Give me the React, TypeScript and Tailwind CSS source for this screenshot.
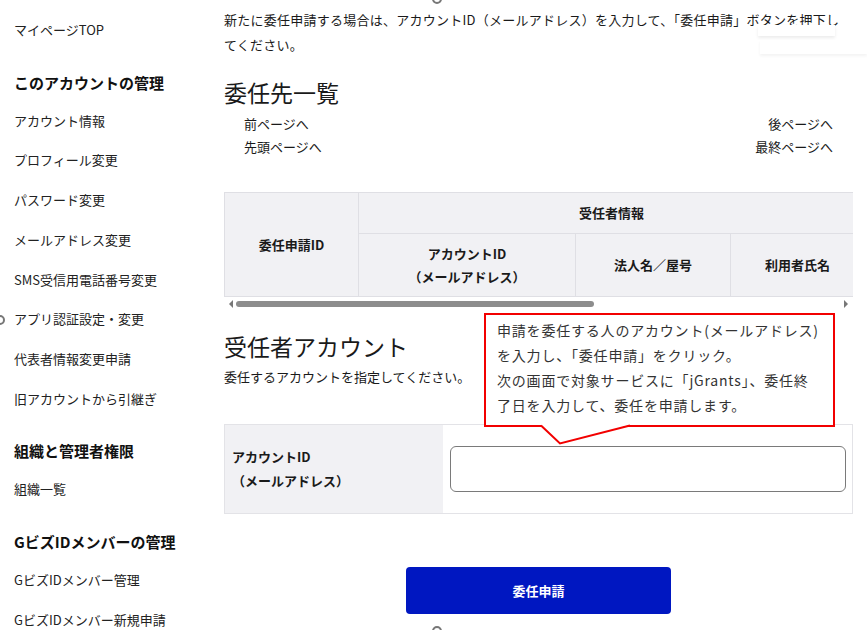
import React from "react";

const font = { fontFamily: '"Noto Sans CJK JP", "Noto Sans", sans-serif' };

const sideSections: { heading?: string; items: string[] }[] = [
  { items: ["マイページTOP"] },
  {
    heading: "このアカウントの管理",
    items: [
      "アカウント情報",
      "プロフィール変更",
      "パスワード変更",
      "メールアドレス変更",
      "SMS受信用電話番号変更",
      "アプリ認証設定・変更",
      "代表者情報変更申請",
      "旧アカウントから引継ぎ",
    ],
  },
  { heading: "組織と管理者権限", items: ["組織一覧"] },
  { heading: "GビズIDメンバーの管理", items: ["GビズIDメンバー管理", "GビズIDメンバー新規申請"] },
];

function Sidebar() {
  return (
    <aside className="w-[224px] shrink-0 pl-[14px] pt-[10px]">
      {sideSections.map((sec, i) => (
        <div key={i}>
          {sec.heading && (
            <h3 className="mt-[16px] flex h-[35px] items-center text-[15px] font-bold text-[#111]">
              {sec.heading}
            </h3>
          )}
          <ul>
            {sec.items.map((item) => (
              <li key={item} className="flex h-[39.7px] items-center text-[13px] text-[#222]">
                {item}
              </li>
            ))}
          </ul>
        </div>
      ))}
    </aside>
  );
}

function Callout() {
  return (
    <div className="absolute left-[484px] top-[313px] z-10">
      <div className="h-[114px] w-[351px] border-2 border-[#f20000] bg-white pl-[11px] pt-[3px] text-[14px] leading-[25px] tracking-[0.8px] text-[#333]">
        <p className="whitespace-nowrap">申請を委任する人のアカウント(メールアドレス)</p>
        <p className="whitespace-nowrap">を入力し、「委任申請」をクリック。</p>
        <p className="whitespace-nowrap">次の画面で対象サービスに「jGrants」、委任終</p>
        <p className="whitespace-nowrap">了日を入力して、委任を申請します。</p>
      </div>
      {/* 吹き出しのしっぽ */}
      <svg className="absolute left-[55px] top-[110px]" width="95" height="24" viewBox="0 0 95 24">
        <polygon points="2,2 21,20.5 91,2" fill="white" />
        <polyline points="2,2.5 21,20.5 91,2.5" fill="none" stroke="#f20000" strokeWidth="2" />
      </svg>
    </div>
  );
}

function DelegateTable() {
  const th = "border border-[#dfdfe4] bg-[#f1f1f4] text-center text-[13px] font-bold text-[#1a1a1a]";
  return (
    <div className="mt-[34px]">
      <div className="w-[629px] overflow-hidden">
        <table className="w-[640px] table-fixed border-collapse">
          <colgroup>
            <col className="w-[134px]" />
            <col className="w-[217px]" />
            <col className="w-[155px]" />
            <col className="w-[134px]" />
          </colgroup>
          <thead>
            <tr className="h-[41px]">
              <th rowSpan={2} className={th}>
                委任申請ID
              </th>
              <th colSpan={3} className={th}>
                受任者情報
              </th>
            </tr>
            <tr className="h-[63px]">
              <th className={`${th} leading-[23px]`}>
                アカウントID
                <br />
                （メールアドレス）
              </th>
              <th className={th}>法人名／屋号</th>
              <th className={th}>利用者氏名</th>
            </tr>
          </thead>
        </table>
      </div>
      {/* スクロールバー */}
      <div className="flex h-[14px] w-[629px] items-center gap-[3px] bg-white px-[5px]">
        <span className="h-0 w-0 border-y-[4px] border-r-[4px] border-y-transparent border-r-[#777]" />
        <div className="flex-1">
          <div className="h-[6px] w-[358px] rounded-full bg-[#8d8d8d]" />
        </div>
        <span className="h-0 w-0 border-y-[4px] border-l-[4px] border-y-transparent border-l-[#777]" />
      </div>
    </div>
  );
}

export default function App() {
  return (
    <div style={font} className="relative h-[630px] w-[867px] overflow-hidden bg-white text-[#1a1a1a]">
      <div className="flex">
        <Sidebar />

        <main className="w-[629px] shrink-0 pt-[7px]">
          <p className="w-[618px] text-[13px] leading-[25px] tracking-[0.25px]">
            新たに委任申請する場合は、アカウントID（メールアドレス）を入力して、「委任申請」ボタンを押下してください。
          </p>

          <h2 className="mt-[18px] text-[23px] leading-[34px]">委任先一覧</h2>
          <div className="mt-[3px] flex justify-between px-5 text-[13px] leading-[23px]">
            <div>
              <a className="block">前ページへ</a>
              <a className="block">先頭ページへ</a>
            </div>
            <div className="text-right">
              <a className="block">後ページへ</a>
              <a className="block">最終ページへ</a>
            </div>
          </div>

          <DelegateTable />

          <h2 className="mt-[18px] text-[23px] leading-[34px]">受任者アカウント</h2>
          <p className="mt-[4px] text-[13px] leading-[20px]">委任するアカウントを指定してください。</p>

          <div className="mt-[37px] flex h-[90px] border border-[#e3e3e7]">
            <div className="flex w-[218px] flex-col justify-center bg-[#f1f1f4] pl-[7px] text-[13px] font-semibold leading-[24px]">
              <span>アカウントID</span>
              <span>（メールアドレス）</span>
            </div>
            <div className="flex flex-1 items-center pl-[7px] pr-[6px]">
              <input
                type="text"
                className="h-[46px] w-full rounded-[6px] border border-[#7a7a7a] bg-white px-3 text-[14px]"
              />
            </div>
          </div>

          <div className="mt-[53px] flex justify-center">
            <button className="h-[47px] w-[265px] rounded-[4px] bg-[#0017c1] text-[13px] font-bold text-white">
              委任申請
            </button>
          </div>
        </main>
      </div>

      <Callout />

      {/* 画面端の重なり */}
      <div className="absolute left-[758px] top-[25px] h-[11px] w-[77px] bg-white shadow-[0_2px_3px_rgba(0,0,0,0.08)]" />
      <div className="absolute left-[760px] top-[40px] h-[14px] w-[107px] bg-white shadow-[0_2px_3px_rgba(0,0,0,0.05)]" />
      <span className="absolute left-[432px] top-[-6px] h-[10px] w-[10px] rounded-full border-2 border-[#777]" />
      <span className="absolute left-[-5px] top-[315px] h-[10px] w-[10px] rounded-full border-2 border-[#777]" />
      <span className="absolute left-[432px] top-[626px] h-[10px] w-[10px] rounded-full border-2 border-[#777]" />
    </div>
  );
}
